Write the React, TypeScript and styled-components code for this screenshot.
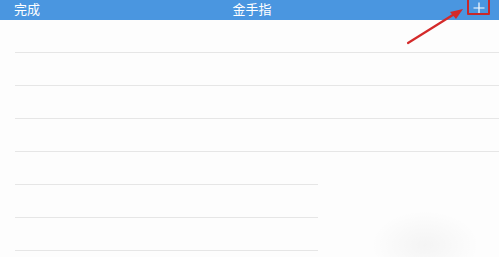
import styled, { createGlobalStyle } from 'styled-components'

const GlobalStyle = createGlobalStyle`
  html, body {
    margin: 0;
    padding: 0;
    background: #fdfdfd;
    font-family: "Noto Sans CJK SC", "Noto Sans", sans-serif;
  }
`;

const Page = styled.div`
  position: relative;
  width: 499px;
  height: 257px;
  overflow: hidden;
  background: #fdfdfd;
`;

const NavBar = styled.div`
  height: 20px;
  background: #4a96e0;
  display: grid;
  grid-template-columns: 1fr auto 1fr;
  align-items: center;
  padding: 0 9px 0 14px;
  color: #ffffff;
`;

const NavTitle = styled.div`
  font-size: 13px;
  line-height: 18px;
  margin-top: -2px;
`;

const NavLeft = styled(NavTitle)`
  justify-self: start;
`;

const NavRight = styled.div`
  justify-self: end;
  position: relative;
  width: 23px;
  height: 20px;
  display: flex;
  align-items: center;
  justify-content: center;
`;

const Highlight = styled.div`
  position: absolute;
  inset: -2px 0 5px 0;
  border: 2px solid #c8282a;
  border-radius: 1px;
`;

const List = styled.div`
  display: flex;
  flex-direction: column;
`;

const Row = styled.div<{ $short?: boolean }>`
  height: 32px;
  margin-left: 15px;
  width: ${p => (p.$short ? '303px' : 'auto')};
  border-bottom: 1px solid #e6e6e6;
`;

const Arrow = styled.svg`
  position: absolute;
  left: 400px;
  top: 4px;
`;

const Glow = styled.div`
  position: absolute;
  left: 370px;
  top: 210px;
  width: 110px;
  height: 70px;
  border-radius: 50%;
  background: radial-gradient(ellipse at center, rgba(0,0,0,0.035) 0%, rgba(0,0,0,0) 70%);
`;

export default function App() {
  const rows = [false, false, false, false, true, true, true];
  return (
    <Page>
      <GlobalStyle />
      <NavBar>
        <NavLeft>完成</NavLeft>
        <NavTitle>金手指</NavTitle>
        <NavRight>
          <Highlight />
          <svg width="12" height="12" viewBox="0 0 12 12" style={{ marginTop: -4 }}>
            <path d="M6 0.5V11.5M0.5 6H11.5" stroke="#fff" strokeWidth="1.2" />
          </svg>
        </NavRight>
      </NavBar>
      <List>
        {rows.map((s, i) => (
          <Row key={i} $short={s} />
        ))}
      </List>
      <Glow />
      <Arrow width="70" height="45" viewBox="0 0 70 45">
        <path d="M8 39L56 9" stroke="#d42a2a" strokeWidth="2.2" strokeLinecap="round" />
        <path d="M63 5L50 8L56 15Z" fill="#d42a2a" />
      </Arrow>
    </Page>
  )
}
